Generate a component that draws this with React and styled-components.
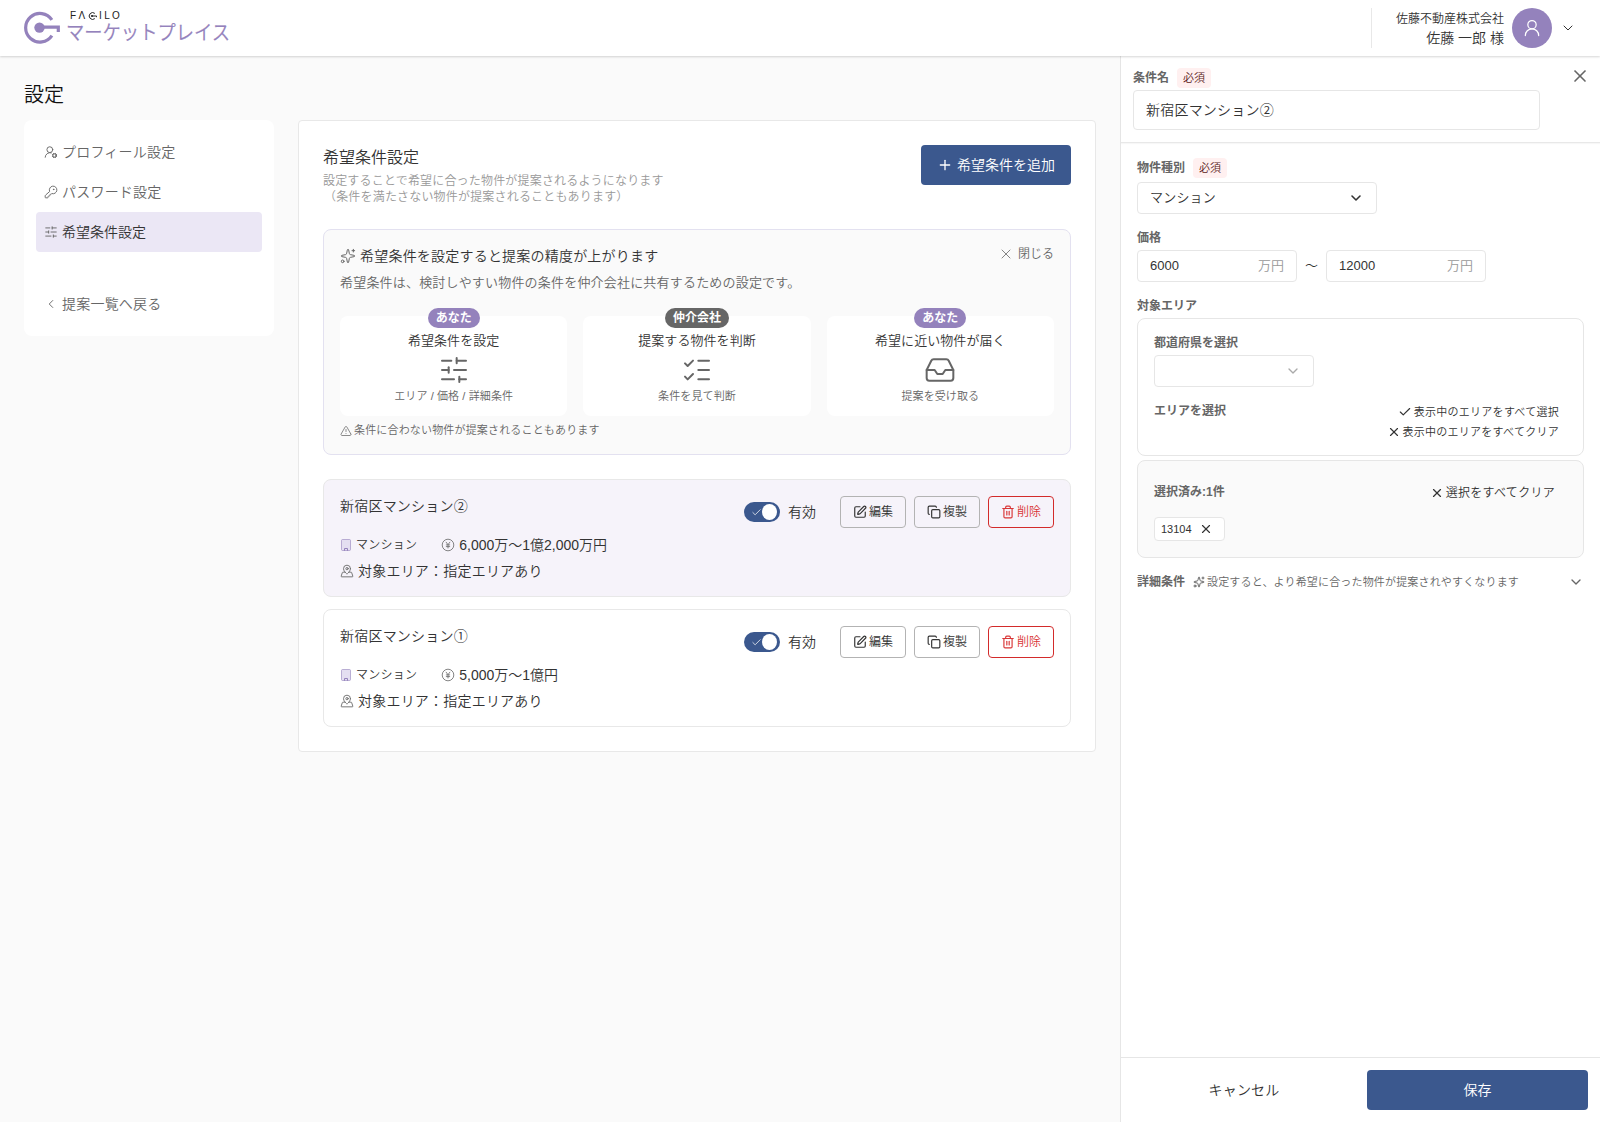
import React from "react";
import styled, { createGlobalStyle, css } from "styled-components";
import {
  UserRoundCog, KeyRound, SlidersHorizontal, ChevronLeft, ChevronDown, Sparkles, X, Plus,
  ListChecks, Inbox, TriangleAlert, SquarePen, Copy, Trash2, MapPinned, Check, UserRound,
} from "lucide-react";

const GlobalStyle = createGlobalStyle`
  *, *::before, *::after { box-sizing: border-box; }
  body {
    margin: 0;
    background: #fafafa;
    color: #333;
    font-family: "Liberation Sans", "Noto Sans CJK JP", sans-serif;
    font-size: 14px;
    font-weight: 350;
    line-height: 20px;
  }
  button, input { font: inherit; color: inherit; }
  svg { flex: none; display: block; }
`;

const kanaTracking = css`
  letter-spacing: 0.015em;
`;

const Page = styled.div`
  display: flex;
  flex-direction: column;
  height: 1122px;
`;

const Header = styled.header`
  display: flex;
  align-items: center;
  justify-content: space-between;
  flex: none;
  height: 56px;
  padding: 0 24px;
  background: #fff;
  box-shadow: 0 1px 2px rgba(0, 0, 0, 0.16);
  z-index: 1;
`;

const Brand = styled.div`
  display: flex;
  align-items: flex-start;
  gap: 6px;
  height: 34px;
`;

const BrandText = styled.div`
  display: flex;
  flex-direction: column;
`;

const BrandName = styled.div`
  display: flex;
  align-items: center;
  height: 8px;
  margin: 1px 0 0 3px;
  gap: 2.4px;
  font-size: 10px;
  line-height: 8px;
  color: #222;
`;

const BrandService = styled.svg`
  margin-top: 1px;
  overflow: visible;
`;

const Account = styled.div`
  display: flex;
  align-items: center;
  height: 40px;
  padding-left: 24px;
  border-left: 1px solid #e8e8e8;
`;

const AccountText = styled.div`
  margin-right: 8px;
  padding-top: 1px;
  text-align: right;
  white-space: nowrap;
`;

const Company = styled.div`
  font-size: 12px;
  line-height: 18px;
`;

const Avatar = styled.div`
  display: grid;
  place-items: center;
  width: 40px;
  height: 40px;
  margin-right: 8px;
  border-radius: 50%;
  background: #9482bc;
  color: #fff;
`;

const Body = styled.div`
  display: flex;
  flex: 1;
  min-height: 0;
`;

const Content = styled.div`
  flex: 1;
  min-width: 0;
  padding: 25px 24px 0;
`;

const PageTitle = styled.h1`
  margin: 0 0 11px;
  font-size: 20px;
  line-height: 28px;
  font-weight: 350;
  color: #111;
`;

const Columns = styled.div`
  display: flex;
  align-items: flex-start;
  gap: 24px;
`;

const SideNav = styled.nav`
  display: flex;
  flex-direction: column;
  flex: none;
  width: 250px;
  padding: 12px;
  border-radius: 8px;
  background: #fff;
`;

const NavItem = styled.a`
  display: flex;
  align-items: center;
  gap: 4px;
  height: 40px;
  padding: 0 8px;
  border-radius: 4px;
  color: ${(p) => (p.$active ? "#333" : "#666")};
  background: ${(p) => (p.$active ? "#ebe7f5" : "transparent")};
  margin-top: ${(p) => (p.$spaced ? "32px" : "0")};
  letter-spacing: ${(p) => (p.$active ? "normal" : "0.015em")};
  svg { color: #666; }
`;

const MainCard = styled.main`
  flex: 1;
  min-width: 0;
  height: 632px;
  padding: 24px;
  border: 1px solid #e8e8e8;
  border-radius: 4px;
  background: #fff;
`;

const CardHead = styled.div`
  display: flex;
  justify-content: space-between;
  align-items: flex-start;
  height: 60px;
  margin-bottom: 24px;
`;

const CardTitle = styled.h2`
  margin: 0 0 3px;
  padding-top: 1px;
  font-size: 16px;
  line-height: 24px;
  font-weight: 350;
`;

const CardLead = styled.p`
  ${kanaTracking}
  margin: 0;
  padding-left: ${(p) => p.$indent || 0}px;
  font-size: 12px;
  line-height: 16px;
  color: #999;
`;

const PrimaryButton = styled.button`
  display: flex;
  align-items: center;
  justify-content: center;
  gap: 4px;
  width: ${(p) => p.$width}px;
  height: 40px;
  padding: 0;
  border: 0;
  border-radius: 4px;
  background: #3b588e;
  color: #fff;
`;

const Guide = styled.section`
  height: 226px;
  padding: 16px;
  margin-bottom: 24px;
  border: 1px solid #e3e1f0;
  border-radius: 8px;
  background: #fafafa;
`;

const GuideHead = styled.div`
  display: flex;
  justify-content: space-between;
  height: 20px;
`;

const GuideTitle = styled.div`
  ${kanaTracking}
  display: flex;
  align-items: center;
  gap: 4px;
  svg { color: #666; }
`;

const CloseButton = styled.button`
  display: flex;
  align-items: center;
  gap: 4px;
  height: 16px;
  padding: 0;
  border: 0;
  background: none;
  font-size: 12px;
  color: #666;
`;

const GuideLead = styled.p`
  ${kanaTracking}
  margin: 7px 0 23px;
  font-size: 13px;
  color: #666;
`;

const Steps = styled.div`
  display: grid;
  grid-template-columns: repeat(3, 1fr);
  gap: 16px;
`;

const Step = styled.div`
  display: flex;
  flex-direction: column;
  align-items: center;
  height: 100px;
  border-radius: 8px;
  background: #fff;
  svg { color: #666; margin: 3px 0 2px; }
`;

const StepBadge = styled.span`
  height: 20px;
  margin: -8px 0 3px;
  padding: 0 8px;
  border-radius: 10px;
  background: ${(p) => p.$color};
  color: #fff;
  font-size: 12px;
  font-weight: 700;
  line-height: 20px;
`;

const StepTitle = styled.div`
  font-size: 13px;
  letter-spacing: 0.005em;
`;

const StepNote = styled.div`
  font-size: 11px;
  line-height: 17px;
  letter-spacing: 0.01em;
  color: #666;
`;

const Caution = styled.div`
  ${kanaTracking}
  display: flex;
  align-items: center;
  gap: 2px;
  margin-top: 6px;
  font-size: 11px;
  line-height: 17px;
  color: #666;
`;

const ConditionCard = styled.article`
  height: 118px;
  padding: 16px;
  margin-bottom: 12px;
  border: 1px solid #e8e8e8;
  border-radius: 8px;
  background: ${(p) => (p.$selected ? "#f6f3fa" : "#fff")};
`;

const ConditionHead = styled.div`
  display: flex;
  align-items: center;
  height: 32px;
`;

const ConditionName = styled.div`
  ${kanaTracking}
  flex: 1;
  align-self: flex-start;
`;

const Toggle = styled.span`
  display: flex;
  align-items: center;
  justify-content: space-between;
  width: 36px;
  height: 20px;
  margin-right: 8px;
  padding: 0 3px 0 7px;
  border-radius: 10px;
  background: #3b588e;
  color: #fff;
  &::after {
    content: "";
    width: 16px;
    height: 16px;
    border-radius: 50%;
    background: #fff;
  }
`;

const ToggleLabel = styled.span`
  margin-right: 24px;
`;

const Actions = styled.div`
  display: flex;
  gap: 8px;
`;

const ActionButton = styled.button`
  display: flex;
  align-items: center;
  justify-content: center;
  gap: 2px;
  width: 66px;
  height: 32px;
  padding: 0;
  border: 1px solid ${(p) => (p.$danger ? "#d32b2b" : "#b3b3b3")};
  border-radius: 4px;
  background: transparent;
  font-size: 12px;
  color: ${(p) => (p.$danger ? "#d93636" : "#333")};
`;

const Facts = styled.div`
  display: flex;
  gap: 24px;
  height: 20px;
  margin-top: 7px;
`;

const Fact = styled.div`
  display: flex;
  align-items: center;
  gap: 4px;
  font-size: ${(p) => (p.$small ? 12 : 14)}px;
  letter-spacing: ${(p) => (p.$small ? "0.02em" : "normal")};
`;

const AreaFact = styled(Fact)`
  ${kanaTracking}
  height: 20px;
  margin-top: 6px;
  svg { color: #666; }
`;

const Panel = styled.aside`
  display: flex;
  flex-direction: column;
  flex: none;
  width: 480px;
  border-left: 1px solid #e6e6e6;
  background: #fff;
`;

const PanelHead = styled.div`
  display: flex;
  justify-content: space-between;
  flex: none;
  height: 87px;
  padding: 12px 10px 0 12px;
  border-bottom: 1px solid #e8e8e8;
  box-shadow: 0 1px 1px rgba(0, 0, 0, 0.03);
`;

const PanelClose = styled.button`
  display: block;
  height: 20px;
  margin-top: -2px;
  padding: 0;
  border: 0;
  background: none;
  color: #666;
`;

const LabelRow = styled.div`
  display: flex;
  align-items: center;
  gap: 8px;
  height: 20px;
  margin-bottom: ${(p) => p.$gap}px;
`;

const Label = styled.span`
  font-size: 12px;
  font-weight: 700;
  line-height: 18px;
  color: #666;
`;

const Required = styled.span`
  height: 20px;
  padding: 0 6px;
  border-radius: 4px;
  background: #fff0f0;
  font-size: 11px;
  line-height: 20px;
  color: #5b1a1a;
`;

const field = css`
  display: flex;
  align-items: center;
  justify-content: space-between;
  padding: 0 12px;
  border: 1px solid #e6e6e6;
  border-radius: 4px;
  background: #fff;
`;

const NameInput = styled.input`
  ${field}
  ${kanaTracking}
  width: 407px;
  height: 40px;
  padding-bottom: 2px;
  outline: 0;
`;

const Field = styled.div`
  ${field}
  width: ${(p) => p.$width}px;
  height: 32px;
  font-size: 13px;
`;

const SelectValue = styled.span`
  ${kanaTracking}
`;

const Unit = styled.span`
  color: #999;
`;

const PanelBody = styled.div`
  flex: 1;
  padding: 15px 16px 0 16px;
`;

const PriceRow = styled.div`
  display: flex;
  align-items: center;
  gap: 8px;
  font-size: 13px;
`;

const Group = styled.div`
  margin-bottom: ${(p) => p.$after}px;
`;

const AreaBox = styled.div`
  height: ${(p) => p.$height}px;
  padding: 0 16px;
  margin-bottom: 4px;
  border: 1px solid #e6e6e6;
  border-radius: 8px;
  background: ${(p) => (p.$muted ? "#fafafa" : "#fff")};
`;

const AreaHead = styled.div`
  display: flex;
  justify-content: space-between;
  align-items: flex-start;
  padding: ${(p) => p.$top}px 0 ${(p) => p.$bottom || 0}px;
`;

const BulkActions = styled.div`
  display: flex;
  flex-direction: column;
  align-items: flex-end;
  padding-right: ${(p) => p.$right}px;
`;

const BulkButton = styled.button`
  display: flex;
  align-items: center;
  gap: 2px;
  height: 20px;
  padding: 0;
  border: 0;
  background: none;
  font-size: ${(p) => p.$size || 11}px;
  letter-spacing: 0.024em;
`;

const Tag = styled.span`
  display: flex;
  align-items: center;
  gap: 7px;
  width: 71px;
  height: 24px;
  margin-top: 14px;
  padding-left: 6px;
  border: 1px solid #e6e6e6;
  border-radius: 4px;
  background: #fff;
  font-size: 11px;
`;

const DetailRow = styled.div`
  display: flex;
  align-items: center;
  height: 20px;
  margin-top: 14px;
  color: #666;
`;

const DetailHint = styled.span`
  ${kanaTracking}
  display: flex;
  align-items: center;
  flex: 1;
  gap: 2px;
  margin-left: 8px;
  font-size: 11px;
`;

const PanelFoot = styled.footer`
  display: flex;
  flex: none;
  height: 65px;
  padding: 12px;
  border-top: 1px solid #e6e6e6;
`;

const CancelButton = styled.button`
  ${kanaTracking}
  flex: 1;
  border: 0;
  margin-right: 12px;
  background: none;
`;

function BrandMark() {
  return (
    <svg width="37" height="34" viewBox="0 0 37 34" fill="none" stroke="#9482bc">
      <path d="M27.9 8.9A14.3 14.3 0 1 0 27.9 24.6" strokeWidth="3.2" />
      <path d="M15.5 16.2H34.3V21" strokeWidth="3.2" />
      <circle cx="15.5" cy="16.6" r="5.2" fill="#9482bc" stroke="none" />
    </svg>
  );
}

function Logo() {
  return (
    <Brand>
      <BrandMark />
      <BrandText>
        <BrandName>
          <span>F</span>
          <span>Λ</span>
          <svg width="9" height="8" viewBox="0 0 9 8" fill="none" stroke="#222">
            <path d="M6.8 1.4A3.4 3.4 0 1 0 6.8 6.6M3.9 4H8.6V5.2" strokeWidth="1" />
            <circle cx="4" cy="4" r="1.1" fill="#222" stroke="none" />
          </svg>
          <span>I</span>
          <span>L</span>
          <span>O</span>
        </BrandName>
        <BrandService width="162" height="24">
          <text x="-1" y="18.5" fontSize="20" fill="#9482bc" stroke="#9482bc" strokeWidth=".2" textLength="164" lengthAdjust="spacingAndGlyphs">
            マーケットプレイス
          </text>
        </BrandService>
      </BrandText>
    </Brand>
  );
}

function BuildingIcon() {
  return (
    <svg width="12" height="14" viewBox="0 0 12 14" fill="none" stroke="#9482bc">
      <rect x="1.5" y="1.5" width="9" height="11" rx="1" fill="#e4dff1" strokeOpacity=".6" />
      <path d="M4.5 12.8V10.5H7.5V12.8" />
    </svg>
  );
}

function YenIcon() {
  return (
    <svg width="14" height="14" viewBox="0 0 14 14" fill="none" stroke="#666" strokeWidth=".8">
      <circle cx="7" cy="7" r="5.8" />
      <path d="M4.9 3.9 7 6.7 9.1 3.9M7 6.7V10.4M4.9 6.9H9.1M4.9 8.6H9.1" />
    </svg>
  );
}

const steps = [
  { who: "あなた", color: "#9482bc", title: "希望条件を設定", icon: SlidersHorizontal, note: "エリア / 価格 / 詳細条件" },
  { who: "仲介会社", color: "#666", title: "提案する物件を判断", icon: ListChecks, note: "条件を見て判断" },
  { who: "あなた", color: "#9482bc", title: "希望に近い物件が届く", icon: Inbox, note: "提案を受け取る" },
];

const conditions = [
  { name: "新宿区マンション②", price: "6,000万〜1億2,000万円", selected: true },
  { name: "新宿区マンション①", price: "5,000万〜1億円", selected: false },
];

function Condition({ name, price, selected }) {
  return (
    <ConditionCard $selected={selected}>
      <ConditionHead>
        <ConditionName>{name}</ConditionName>
        <Toggle><Check size={11} strokeWidth={1.6} /></Toggle>
        <ToggleLabel>有効</ToggleLabel>
        <Actions>
          <ActionButton><SquarePen size={14} />編集</ActionButton>
          <ActionButton><Copy size={14} />複製</ActionButton>
          <ActionButton $danger><Trash2 size={14} />削除</ActionButton>
        </Actions>
      </ConditionHead>
      <Facts>
        <Fact $small><BuildingIcon />マンション</Fact>
        <Fact><YenIcon />{price}</Fact>
      </Facts>
      <AreaFact><MapPinned size={14} strokeWidth={1.5} />対象エリア：指定エリアあり</AreaFact>
    </ConditionCard>
  );
}

function EditPanel() {
  return (
    <Panel>
      <PanelHead>
        <div>
          <LabelRow $gap={2}><Label>条件名</Label><Required>必須</Required></LabelRow>
          <NameInput defaultValue="新宿区マンション②" />
        </div>
        <PanelClose><X size={20} /></PanelClose>
      </PanelHead>
      <PanelBody>
        <Group $after={14}>
          <LabelRow $gap={4}><Label>物件種別</Label><Required>必須</Required></LabelRow>
          <Field $width={240}><SelectValue>マンション</SelectValue><ChevronDown size={16} strokeWidth={2.4} /></Field>
        </Group>
        <Group $after={14}>
          <LabelRow $gap={2}><Label>価格</Label></LabelRow>
          <PriceRow>
            <Field $width={160}>6000<Unit>万円</Unit></Field>
            〜
            <Field $width={160}>12000<Unit>万円</Unit></Field>
          </PriceRow>
        </Group>
        <LabelRow $gap={2}><Label>対象エリア</Label></LabelRow>
        <AreaBox $height={138}>
          <AreaHead $top={15} $bottom={3}><Label>都道府県を選択</Label></AreaHead>
          <Field $width={160}><SelectValue /><ChevronDown size={16} color="#aaa" /></Field>
          <AreaHead $top={15}>
            <Label>エリアを選択</Label>
            <BulkActions $right={8}>
              <BulkButton><Check size={14} />表示中のエリアをすべて選択</BulkButton>
              <BulkButton><X size={14} />表示中のエリアをすべてクリア</BulkButton>
            </BulkActions>
          </AreaHead>
        </AreaBox>
        <AreaBox $height={98} $muted>
          <AreaHead $top={22}>
            <Label>選択済み:1件</Label>
            <BulkActions $right={12}>
              <BulkButton $size={12}><X size={14} />選択をすべてクリア</BulkButton>
            </BulkActions>
          </AreaHead>
          <Tag>13104<X size={14} /></Tag>
        </AreaBox>
        <DetailRow>
          <Label>詳細条件</Label>
          <DetailHint><Sparkles size={12} />設定すると、より希望に合った物件が提案されやすくなります</DetailHint>
          <ChevronDown size={16} />
        </DetailRow>
      </PanelBody>
      <PanelFoot>
        <CancelButton>キャンセル</CancelButton>
        <PrimaryButton $width={221}>保存</PrimaryButton>
      </PanelFoot>
    </Panel>
  );
}

export default function App() {
  return (
    <Page>
      <GlobalStyle />
      <Header>
        <Logo />
        <Account>
          <AccountText>
            <Company>佐藤不動産株式会社</Company>
            <div>佐藤 一郎 様</div>
          </AccountText>
          <Avatar><UserRound size={20} strokeWidth={1.5} /></Avatar>
          <ChevronDown size={16} strokeWidth={1.5} />
        </Account>
      </Header>
      <Body>
        <Content>
          <PageTitle>設定</PageTitle>
          <Columns>
            <SideNav>
              <NavItem><UserRoundCog size={14} strokeWidth={1.6} />プロフィール設定</NavItem>
              <NavItem><KeyRound size={14} strokeWidth={1.6} />パスワード設定</NavItem>
              <NavItem $active><SlidersHorizontal size={14} strokeWidth={1.6} />希望条件設定</NavItem>
              <NavItem $spaced><ChevronLeft size={14} strokeWidth={1.6} />提案一覧へ戻る</NavItem>
            </SideNav>
            <MainCard>
              <CardHead>
                <div>
                  <CardTitle>希望条件設定</CardTitle>
                  <CardLead>設定することで希望に合った物件が提案されるようになります</CardLead>
                  <CardLead $indent={1}>（条件を満たさない物件が提案されることもあります）</CardLead>
                </div>
                <PrimaryButton $width={150}><Plus size={16} strokeWidth={2} />希望条件を追加</PrimaryButton>
              </CardHead>
              <Guide>
                <GuideHead>
                  <GuideTitle><Sparkles size={16} strokeWidth={1.5} />希望条件を設定すると提案の精度が上がります</GuideTitle>
                  <CloseButton><X size={16} strokeWidth={1.2} />閉じる</CloseButton>
                </GuideHead>
                <GuideLead>希望条件は、検討しやすい物件の条件を仲介会社に共有するための設定です。</GuideLead>
                <Steps>
                  {steps.map(({ who, color, title, icon: Icon, note }) => (
                    <Step key={title}>
                      <StepBadge $color={color}>{who}</StepBadge>
                      <StepTitle>{title}</StepTitle>
                      <Icon size={32} strokeWidth={1.5} />
                      <StepNote>{note}</StepNote>
                    </Step>
                  ))}
                </Steps>
                <Caution><TriangleAlert size={12} strokeWidth={1.5} />条件に合わない物件が提案されることもあります</Caution>
              </Guide>
              {conditions.map((c) => <Condition key={c.name} {...c} />)}
            </MainCard>
          </Columns>
        </Content>
        <EditPanel />
      </Body>
    </Page>
  );
}
